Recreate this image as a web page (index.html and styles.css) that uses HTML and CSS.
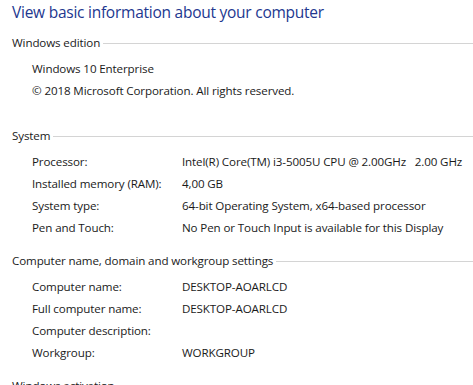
FILE: index.html
```html
<!DOCTYPE html>
<html>
<head>
<meta charset="utf-8">
<link rel="stylesheet" href="styles.css">
</head>
<body>
<div class="page">
  <h1 class="title">View basic information about your computer</h1>

  <section class="section section-edition">
    <div class="header"><span>Windows edition</span></div>
    <div class="rows">
      <div class="full">Windows 10 Enterprise</div>
      <div class="full">© 2018 Microsoft Corporation. All rights reserved.</div>
    </div>
  </section>

  <section class="section">
    <div class="header"><span>System</span></div>
    <div class="rows">
      <div class="label">Processor:</div><div class="value">Intel(R) Core(TM) i3-5005U CPU @ 2.00GHz&nbsp;&nbsp;&nbsp;2.00 GHz</div>
      <div class="label">Installed memory (RAM):</div><div class="value">4,00 GB</div>
      <div class="label">System type:</div><div class="value">64-bit Operating System, x64-based processor</div>
      <div class="label">Pen and Touch:</div><div class="value">No Pen or Touch Input is available for this Display</div>
    </div>
  </section>

  <section class="section">
    <div class="header"><span>Computer name, domain and workgroup settings</span></div>
    <div class="rows">
      <div class="label">Computer name:</div><div class="value">DESKTOP-AOARLCD</div>
      <div class="label">Full computer name:</div><div class="value">DESKTOP-AOARLCD</div>
      <div class="label">Computer description:</div><div class="value"></div>
      <div class="label">Workgroup:</div><div class="value">WORKGROUP</div>
    </div>
  </section>

  <section class="section">
    <div class="header"><span>Windows activation</span></div>
  </section>
</div>
</body>
</html>
```
FILE: styles.css
```css
html, body {
  margin: 0;
  padding: 0;
  background: #ffffff;
  overflow: hidden;
}
.page {
  width: 473px;
  height: 385px;
  overflow: hidden;
  font-family: "Open Sans", "Noto Sans", sans-serif;
  font-size: 11.6px;
  letter-spacing: -0.12px;
  color: #1a1a1a;
}
.title {
  margin: 0 0 8px 12px;
  font-size: 15.5px;
  letter-spacing: -0.25px;
  font-weight: normal;
  line-height: 24px;
  color: #22378f;
  white-space: nowrap;
}
.section {
  margin-bottom: 11px;
}
.section-edition {
  margin-bottom: 23px;
}
.header {
  display: flex;
  align-items: center;
  height: 22px;
  line-height: 22px;
  padding-left: 12px;
  white-space: nowrap;
}
.header::after {
  content: "";
  flex: 1;
  height: 1px;
  background: #d4d4d4;
  margin-left: 3px;
  margin-top: 1px;
}
.rows {
  display: grid;
  grid-template-columns: 150px 1fr;
  grid-auto-rows: 22px;
  line-height: 22px;
  padding-left: 32px;
  margin-top: 4px;
  white-space: nowrap;
}
.full {
  grid-column: 1 / span 2;
}
```
